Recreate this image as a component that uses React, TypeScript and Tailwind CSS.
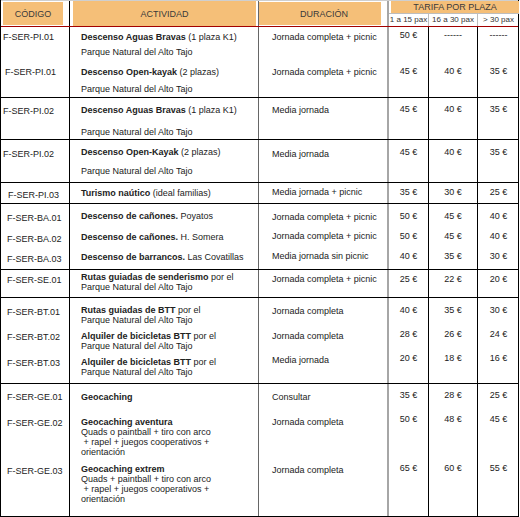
import React from 'react';

type Part = [string, boolean?];
type Line = { cls?: string; parts: Part[] };
type SubRow = {
  h: string;
  code: string;
  codeCls: string;
  actCls: string;
  lines: Line[];
  dur: string;
  durCls: string;
  prices: string[];
  priceCls: string;
  last?: boolean;
};

const PARQUE: Part[] = [['Parque Natural del Alto Tajo']];

const rows: SubRow[] = [
  // Piragüismo
  {
    h: 'h-[35px]', code: 'F-SER-PI.01', codeCls: 'pt-[5px] pl-[2px]', actCls: 'pt-[5px]',
    lines: [{ parts: [['Descenso Aguas Bravas', true], [' (1 plaza K1)']] }, { cls: 'mt-[5px]', parts: PARQUE }],
    dur: 'Jornada completa + picnic', durCls: 'pt-[5px]', prices: ['50 €', '------', '------'], priceCls: 'pt-[3px]',
  },
  {
    h: 'h-[36px]', code: 'F-SER-PI.01', codeCls: 'pt-[5px] pl-[4px]', actCls: 'pt-[5px]',
    lines: [{ parts: [['Descenso Open-kayak', true], [' (2 plazas)']] }, { cls: 'mt-[7px]', parts: PARQUE }],
    dur: 'Jornada completa + picnic', durCls: 'pt-[5px]', prices: ['45 €', '40 €', '35 €'], priceCls: 'pt-[4px]', last: true,
  },
  {
    h: 'h-[42px]', code: 'F-SER-PI.02', codeCls: 'pt-[8px] pl-[2px]', actCls: 'pt-[7px]',
    lines: [{ parts: [['Descenso Aguas Bravas', true], [' (1 plaza K1)']] }, { cls: 'mt-[12px]', parts: PARQUE }],
    dur: 'Media jornada', durCls: 'pt-[7px]', prices: ['45 €', '40 €', '35 €'], priceCls: 'pt-[6px]', last: true,
  },
  {
    h: 'h-[43px]', code: 'F-SER-PI.02', codeCls: 'pt-[9px] pl-[2px]', actCls: 'pt-[7px]',
    lines: [{ parts: [['Descenso Open-Kayak', true], [' (2 plazas)']] }, { cls: 'mt-[9px]', parts: PARQUE }],
    dur: 'Media jornada', durCls: 'pt-[9px]', prices: ['45 €', '40 €', '35 €'], priceCls: 'pt-[7px]', last: true,
  },
  {
    h: 'h-[21px]', code: 'F-SER-PI.03', codeCls: 'pt-[7px] pl-[7px]', actCls: 'pt-[5px]',
    lines: [{ parts: [['Turismo naútico', true], [' (ideal familias)']] }],
    dur: 'Media jornada + picnic', durCls: 'pt-[4px]', prices: ['35 €', '30 €', '25 €'], priceCls: 'pt-[4px]', last: true,
  },
  // Barranquismo
  {
    h: 'h-[21px]', code: 'F-SER-BA.01', codeCls: 'pt-[9px] pl-[6px]', actCls: 'pt-[7px]',
    lines: [{ parts: [['Descenso de cañones.', true], [' Poyatos']] }],
    dur: 'Jornada completa + picnic', durCls: 'pt-[8px]', prices: ['50 €', '45 €', '40 €'], priceCls: 'pt-[7px]',
  },
  {
    h: 'h-[21px]', code: 'F-SER-BA.02', codeCls: 'pt-[9px] pl-[6px]', actCls: 'pt-[7px]',
    lines: [{ parts: [['Descenso de cañones.', true], [' H. Somera']] }],
    dur: 'Jornada completa + picnic', durCls: 'pt-[6px]', prices: ['50 €', '45 €', '40 €'], priceCls: 'pt-[6px]',
  },
  {
    h: 'h-[24px]', code: 'F-SER-BA.03', codeCls: 'pt-[8px] pl-[6px]', actCls: 'pt-[6px]',
    lines: [{ parts: [['Descenso de barrancos.', true], [' Las Covatillas']] }],
    dur: 'Media jornada sin picnic', durCls: 'pt-[5px]', prices: ['40 €', '35 €', '30 €'], priceCls: 'pt-[5px]', last: true,
  },
  // Senderismo
  {
    h: 'h-[28px]', code: 'F-SER-SE.01', codeCls: 'pt-[5px] pl-[6px]', actCls: 'pt-[2px]',
    lines: [{ parts: [['Rutas guiadas de senderismo', true], [' por el']] }, { parts: PARQUE }],
    dur: 'Jornada completa + picnic', durCls: 'pt-[4px]', prices: ['25 €', '22 €', '20 €'], priceCls: 'pt-[4px]', last: true,
  },
  // BTT
  {
    h: 'h-[25px]', code: 'F-SER-BT.01', codeCls: 'pt-[9px] pl-[6px]', actCls: 'pt-[7px]',
    lines: [{ parts: [['Rutas guiadas de BTT', true], [' por el']] }, { parts: PARQUE }],
    dur: 'Jornada completa', durCls: 'pt-[8px]', prices: ['40 €', '35 €', '30 €'], priceCls: 'pt-[7px]',
  },
  {
    h: 'h-[26px]', code: 'F-SER-BT.02', codeCls: 'pt-[9px] pl-[6px]', actCls: 'pt-[8px]',
    lines: [{ parts: [['Alquiler de bicicletas BTT', true], [' por el']] }, { parts: PARQUE }],
    dur: 'Jornada completa', durCls: 'pt-[8px]', prices: ['28 €', '26 €', '24 €'], priceCls: 'pt-[6px]',
  },
  {
    h: 'h-[35px]', code: 'F-SER-BT.03', codeCls: 'pt-[9px] pl-[6px]', actCls: 'pt-[8px]',
    lines: [{ parts: [['Alquiler de bicicletas BTT', true], [' por el']] }, { parts: PARQUE }],
    dur: 'Media jornada', durCls: 'pt-[6px]', prices: ['20 €', '18 €', '16 €'], priceCls: 'pt-[4px]', last: true,
  },
  // Geocaching
  {
    h: 'h-[26px]', code: 'F-SER-GE.01', codeCls: 'pt-[8px] pl-[6px]', actCls: 'pt-[8px]',
    lines: [{ parts: [['Geocaching', true]] }],
    dur: 'Consultar', durCls: 'pt-[8px]', prices: ['35 €', '28 €', '25 €'], priceCls: 'pt-[6px]',
  },
  {
    h: 'h-[48px]', code: 'F-SER-GE.02', codeCls: 'pt-[8px] pl-[6px]', actCls: 'pt-[7px]',
    lines: [
      { parts: [['Geocaching aventura', true]] },
      { parts: [['Quads o paintball + tiro con arco']] },
      { parts: [[' + rapel + juegos cooperativos +']] },
      { parts: [['orientación']] },
    ],
    dur: 'Jornada completa', durCls: 'pt-[7px]', prices: ['50 €', '48 €', '45 €'], priceCls: 'pt-[4px]',
  },
  {
    h: 'h-[59px]', code: 'F-SER-GE.03', codeCls: 'pt-[8px] pl-[6px]', actCls: 'pt-[6px]',
    lines: [
      { parts: [['Geocaching extrem', true]] },
      { parts: [['Quads + paintball + tiro con arco']] },
      { parts: [[' + rapel + juegos cooperativos +']] },
      { parts: [['orientación']] },
    ],
    dur: 'Jornada completa', durCls: 'pt-[7px]', prices: ['65 €', '60 €', '55 €'], priceCls: 'pt-[5px]', last: true,
  },
];

const priceWidths = ['w-[40px]', 'w-[49px]', 'w-[41px]'];

function Header() {
  return (
    <div className="flex h-[27px] border-b border-[#a30000] border-t border-t-[#cfcfcf] text-[#3a3a3a]">
      <div className="w-[69px] shrink-0 border-r border-black pl-[2px] pr-[6px] py-[1px]">
        <div className="h-full bg-[#f5bf78] flex items-center justify-center">CÓDIGO</div>
      </div>
      <div className="w-[189px] shrink-0 border-r border-[#666] pl-[3px] pr-[2px]">
        <div className="h-full bg-[#f5bf78] flex items-center justify-center">ACTIVIDAD</div>
      </div>
      <div className="w-[130px] shrink-0 border-r-2 border-[#a6a6a6] pr-[6px] py-[1px]">
        <div className="h-full bg-[#f5bf78] flex items-center justify-center pl-[8px]">DURACIÓN</div>
      </div>
      <div className="flex-1 flex flex-col">
        <div className="h-[12px] ml-[2px] bg-[#f5bf78] flex items-center justify-center leading-[12px]">
          TARIFA POR PLAZA
        </div>
        <div className="flex-1 flex border-t border-[#bdbdbd] text-[8px] text-[#333]">
          <div className="w-[40px] border-r border-[#bdbdbd] flex items-center justify-center">1 a 15 pax</div>
          <div className="w-[49px] border-r border-[#bdbdbd] flex items-center justify-center">16 a 30 pax</div>
          <div className="w-[41px] flex items-center justify-center">&gt; 30 pax</div>
        </div>
      </div>
    </div>
  );
}

export default function App() {
  return (
    <div className="w-[520px] h-[517px] bg-white">
      <div className="w-[519px] border-l border-r border-black font-['Liberation_Sans',Arial,sans-serif] text-[9px] leading-[10px] text-[#222]">
        <Header />
        {rows.map((r, i) => (
          <div key={i} className={`flex ${r.h} ${r.last ? 'border-b border-black' : ''}`}>
            <div className={`w-[69px] shrink-0 border-r border-black ${r.codeCls}`}>{r.code}</div>
            <div className={`w-[189px] shrink-0 border-r border-[#666] pl-[11px] ${r.actCls}`}>
              {r.lines.map((l, j) => (
                <div key={j} className={`whitespace-pre ${l.cls ?? ''}`}>
                  {l.parts.map(([t, b], k) => (
                    <span key={k} className={b ? 'font-bold' : ''}>
                      {t}
                    </span>
                  ))}
                </div>
              ))}
            </div>
            <div className={`w-[130px] shrink-0 border-r-2 border-[#a6a6a6] pl-[13px] ${r.durCls}`}>{r.dur}</div>
            {r.prices.map((p, j) => (
              <div
                key={j}
                className={`${priceWidths[j]} shrink-0 text-center ${j < 2 ? 'border-r border-black' : ''} ${r.priceCls}`}
              >
                {p}
              </div>
            ))}
          </div>
        ))}
      </div>
    </div>
  );
}
